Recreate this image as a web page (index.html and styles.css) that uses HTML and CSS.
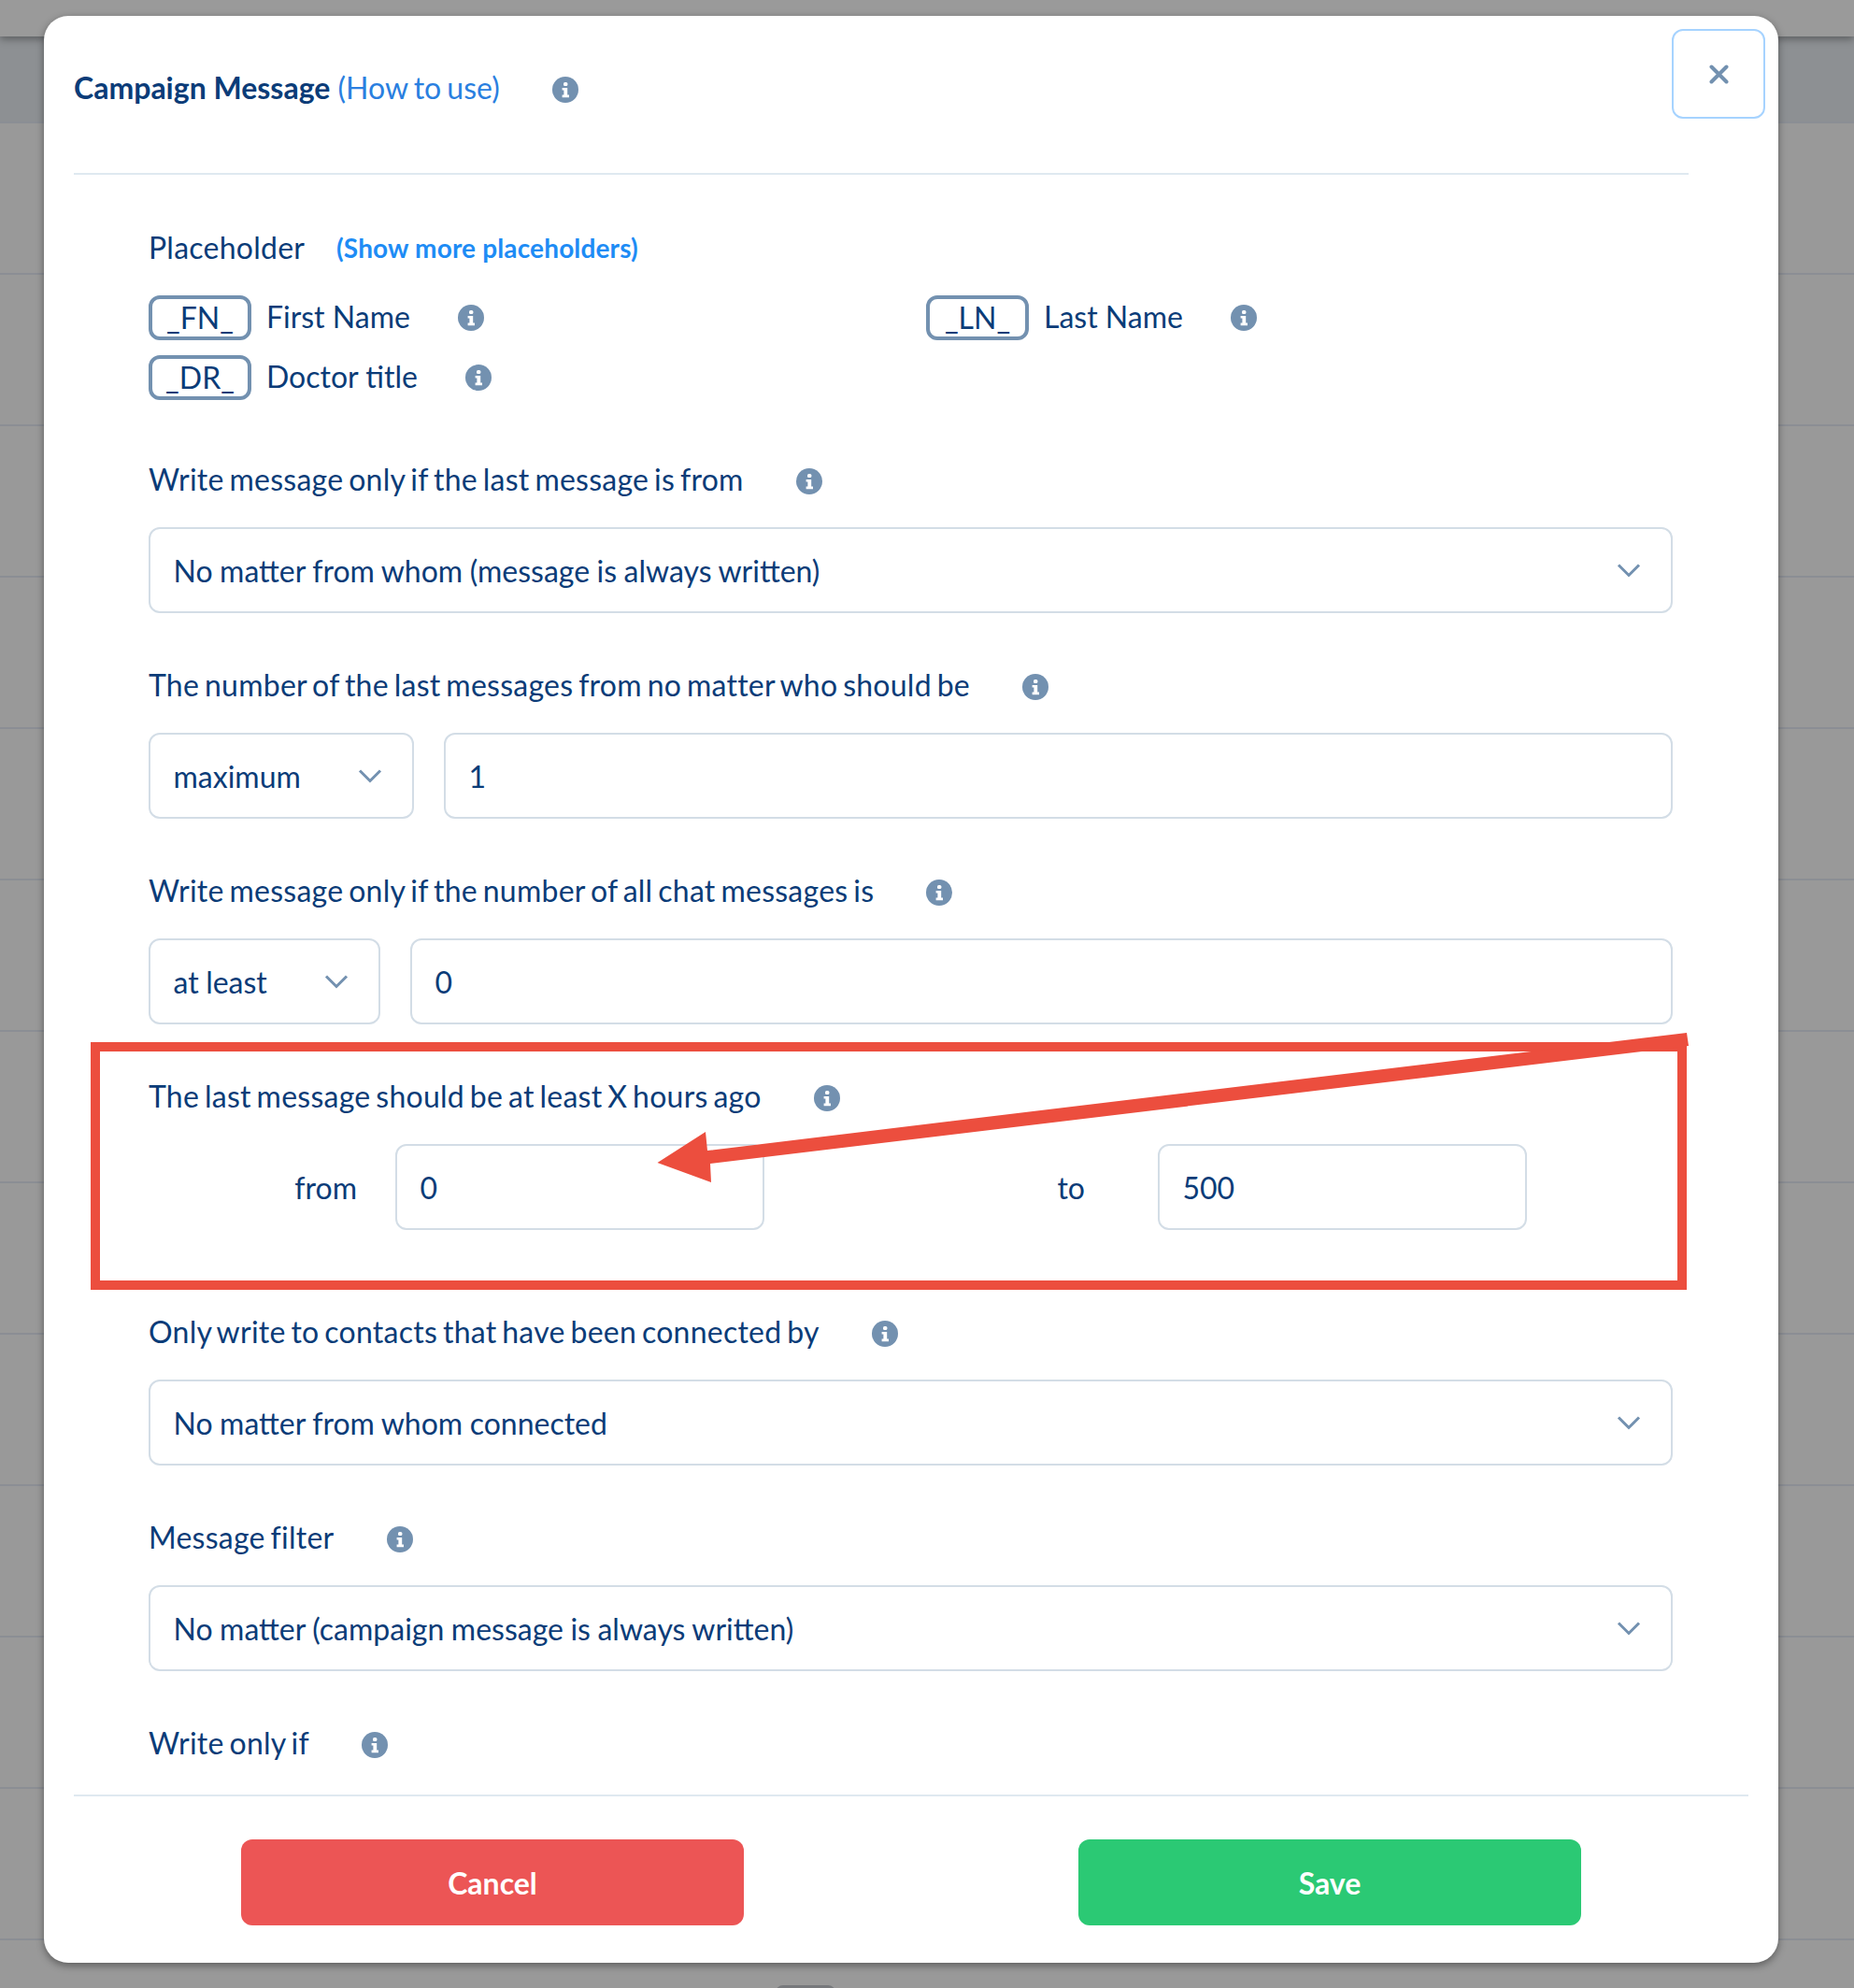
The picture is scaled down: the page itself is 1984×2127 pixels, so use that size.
FILE: index.html
```html
<!DOCTYPE html>
<html lang="en">
  <head>
    <meta charset="UTF-8" />
    <title>Campaign Message</title>
    <link rel="stylesheet" href="styles.css">
  </head>
  <body>
    <svg width="0" height="0" class="defs">
      <symbol id="info" viewBox="0 0 28 28">
        <circle cx="14" cy="14" r="14" fill="#7391b0" />
        <rect x="12" y="6" width="4.4" height="4" rx="1.6" fill="#fff" />
        <path d="M10.6 12h5.6v7.6h1.8v2.6h-7.4v-2.6h1.8v-5h-1.8z" fill="#fff" />
      </symbol>
      <symbol id="chevron" viewBox="0 0 26 16">
        <path d="M2 2.5l11 11 11-11" fill="none" stroke="#7391b0" stroke-width="3" />
      </symbol>
    </svg>

    <div class="page">
      <div class="topbar"></div>
      <div class="row row-first"></div>
      <div class="row"></div>
      <div class="row"></div>
      <div class="row"></div>
      <div class="row"></div>
      <div class="row"></div>
      <div class="row"></div>
      <div class="row"></div>
      <div class="row"></div>
      <div class="row"></div>
      <div class="row"></div>
      <div class="row"></div>
      <div class="row"></div>
    </div>
    <div class="page-tab"></div>

    <div class="modal">
      <div class="modal-header">
        <h2 class="modal-title"><b>Campaign Message</b> <a href="#">(How to use)</a></h2>
        <svg class="info title-info"><use href="#info" /></svg>
      </div>
      <button class="close" aria-label="Close">
        <svg width="21" height="21" viewBox="0 0 21 21"><path d="M2.5 2.5l16 16M18.5 2.5l-16 16" stroke="#7391b0" stroke-width="4" stroke-linecap="round" /></svg>
      </button>

      <div class="modal-body">
        <div class="placeholder-head">
          <span class="label-text">Placeholder</span>
          <a href="#" class="more-link">(Show more placeholders)</a>
        </div>
        <div class="placeholders">
          <div class="placeholder">
            <span class="chip">_FN_</span><span class="chip-name">First Name</span>
            <svg class="info"><use href="#info" /></svg>
          </div>
          <div class="placeholder">
            <span class="chip">_LN_</span><span class="chip-name">Last Name</span>
            <svg class="info"><use href="#info" /></svg>
          </div>
          <div class="placeholder">
            <span class="chip">_DR_</span><span class="chip-name">Doctor title</span>
            <svg class="info"><use href="#info" /></svg>
          </div>
        </div>

        <div class="field">
          <label>Write message only if the last message is from <svg class="info"><use href="#info" /></svg></label>
          <div class="select">No matter from whom (message is always written)<svg class="chevron"><use href="#chevron" /></svg></div>
        </div>

        <div class="field">
          <label>The number of the last messages from no matter who should be <svg class="info"><use href="#info" /></svg></label>
          <div class="inline">
            <div class="select select-max">maximum<svg class="chevron"><use href="#chevron" /></svg></div>
            <div class="input">1</div>
          </div>
        </div>

        <div class="field">
          <label>Write message only if the number of all chat messages is <svg class="info"><use href="#info" /></svg></label>
          <div class="inline">
            <div class="select select-least">at least<svg class="chevron"><use href="#chevron" /></svg></div>
            <div class="input">0</div>
          </div>
        </div>

        <div class="field">
          <label>The last message should be at least X hours ago <svg class="info"><use href="#info" /></svg></label>
          <div class="range">
            <span class="range-from">from</span>
            <div class="input range-input">0</div>
            <span class="range-to">to</span>
            <div class="input range-input">500</div>
          </div>
        </div>

        <div class="field">
          <label>Only write to contacts that have been connected by <svg class="info"><use href="#info" /></svg></label>
          <div class="select">No matter from whom connected<svg class="chevron"><use href="#chevron" /></svg></div>
        </div>

        <div class="field">
          <label>Message filter <svg class="info"><use href="#info" /></svg></label>
          <div class="select">No matter (campaign message is always written)<svg class="chevron"><use href="#chevron" /></svg></div>
        </div>

        <div class="field">
          <label>Write only if <svg class="info"><use href="#info" /></svg></label>
        </div>
      </div>

      <div class="modal-footer">
        <button class="btn btn-cancel">Cancel</button>
        <button class="btn btn-save">Save</button>
      </div>
    </div>

    <!-- screenshot annotation drawn on top of the modal -->
    <svg class="annotation" width="1984" height="2127" viewBox="0 0 1984 2127">
      <rect x="102" y="1120" width="1698" height="255" fill="none" stroke="#ec4e3e" stroke-width="10" />
      <polygon points="703.5,1244 755,1211 757,1231 1805,1105 1807,1119 760,1245 761,1265" fill="#ec4e3e" />
    </svg>
  </body>
</html>
```

FILE: styles.css
```css
html, body {
  margin: 0;
  padding: 0;
}
body {
  width: 1984px;
  height: 2127px;
  overflow: hidden;
  position: relative;
  background-color: #999;
  font-family: Lato, "Open Sans", sans-serif;
  font-size: 32px;
  color: #0b3c78;
}
a {
  text-decoration: none;
}
.defs {
  position: absolute;
}

/* dimmed page behind the modal */
.topbar {
  height: 39px;
  background-color: #9a9a9a;
  box-shadow: 0 3px 8px rgba(0, 0, 0, 0.35);
  position: relative;
}
.row {
  height: 160px;
  border-bottom: 2px solid #8b8e94;
}
.row-first {
  height: 91px;
  background-color: #8d9093;
}
.page-tab {
  position: absolute;
  left: 830px;
  top: 2124px;
  width: 64px;
  height: 8px;
  border-radius: 8px 8px 0 0;
  background-color: #77797c;
}

.modal {
  position: absolute;
  left: 47px;
  top: 17px;
  width: 1856px;
  height: 2083px;
  box-sizing: border-box;
  padding: 0 32px;
  background-color: #fff;
  border-radius: 26px;
  box-shadow: 0 3px 8px rgba(0, 0, 0, 0.4);
}
.modal-header {
  display: flex;
  align-items: center;
  width: 1728px;
  height: 170px;
  padding-bottom: 16px;
  box-sizing: border-box;
  border-bottom: 2px solid #dfe9f0;
}
.modal-title {
  margin: 0;
  font-size: 32px;
  font-weight: 400;
}
.modal-title b {
  font-weight: 700;
}
.modal-title a {
  color: #2a7fe0;
  word-spacing: -2px;
}
.title-info {
  margin: 5px 0 0 56px;
}
.info {
  width: 28px;
  height: 28px;
  vertical-align: middle;
  flex: none;
}
.close {
  position: absolute;
  left: 1742px;
  top: 14px;
  width: 100px;
  height: 96px;
  padding: 0;
  display: flex;
  align-items: center;
  justify-content: center;
  background: #fff;
  border: 2px solid #a6d3ff;
  border-radius: 12px;
}
.modal-body {
  height: 1735px;
  box-sizing: border-box;
  padding: 58px 81px 0 80px;
  overflow: hidden;
  border-bottom: 2px solid #dfe9f0;
}
.placeholder-head {
  display: flex;
  align-items: center;
  height: 40px;
}
.label-text {
  width: 201px;
  margin-bottom: 2px;
  letter-spacing: 0.25px;
}
.more-link {
  color: #1e8cf5;
  font-size: 28px;
  font-weight: 700;
  letter-spacing: 0.15px;
}
.placeholders {
  display: grid;
  grid-template-columns: 832px 1fr;
  row-gap: 16px;
  margin-top: 31px;
}
.placeholder {
  display: flex;
  align-items: center;
  height: 48px;
}
.chip {
  box-sizing: border-box;
  width: 110px;
  height: 48px;
  line-height: 40px;
  text-align: center;
  border: 4px solid #7391b0;
  border-radius: 12px;
}
.chip-name {
  margin: 0 51px 3px 16px;
}
.field {
  margin-top: 64px;
}
.field + .field {
  margin-top: 56px;
}
.field label {
  display: flex;
  align-items: center;
  gap: 56px;
  height: 40px;
  margin-bottom: 32px;
  letter-spacing: 0.25px;
  word-spacing: -2.6px;
}
.field label .info {
  margin-top: 5px;
}
.select, .input {
  box-sizing: border-box;
  height: 92px;
  display: flex;
  align-items: center;
  justify-content: space-between;
  padding: 0 24.5px;
  background-color: #fff;
  border: 2px solid #d3dde6;
  border-radius: 12px;
  word-spacing: -0.7px;
}
.chevron {
  width: 26px;
  height: 16px;
  margin-right: 8px;
  flex: none;
}
.inline {
  display: flex;
  gap: 32px;
}
.inline .input {
  flex: 1;
}
.select-max {
  width: 284px;
}
.select-least {
  width: 248px;
}
.range {
  display: flex;
  align-items: center;
  padding-bottom: 32px;
}
.range-from {
  width: 223px;
  margin-right: 41px;
  text-align: right;
}
.range-to {
  width: 343px;
  margin-right: 78px;
  text-align: right;
}
.range-input {
  width: 395px;
}
.modal-footer {
  display: flex;
  justify-content: space-between;
  padding: 46px 179px 0;
}
.btn {
  width: 538px;
  height: 92px;
  border: none;
  border-radius: 12px;
  color: #fff;
  font-family: Lato, "Open Sans", sans-serif;
  font-size: 32px;
  font-weight: 700;
}
.btn-cancel {
  background-color: #ec5555;
}
.btn-save {
  background-color: #2bc974;
}
.annotation {
  position: absolute;
  left: 0;
  top: 0;
  pointer-events: none;
}
```
